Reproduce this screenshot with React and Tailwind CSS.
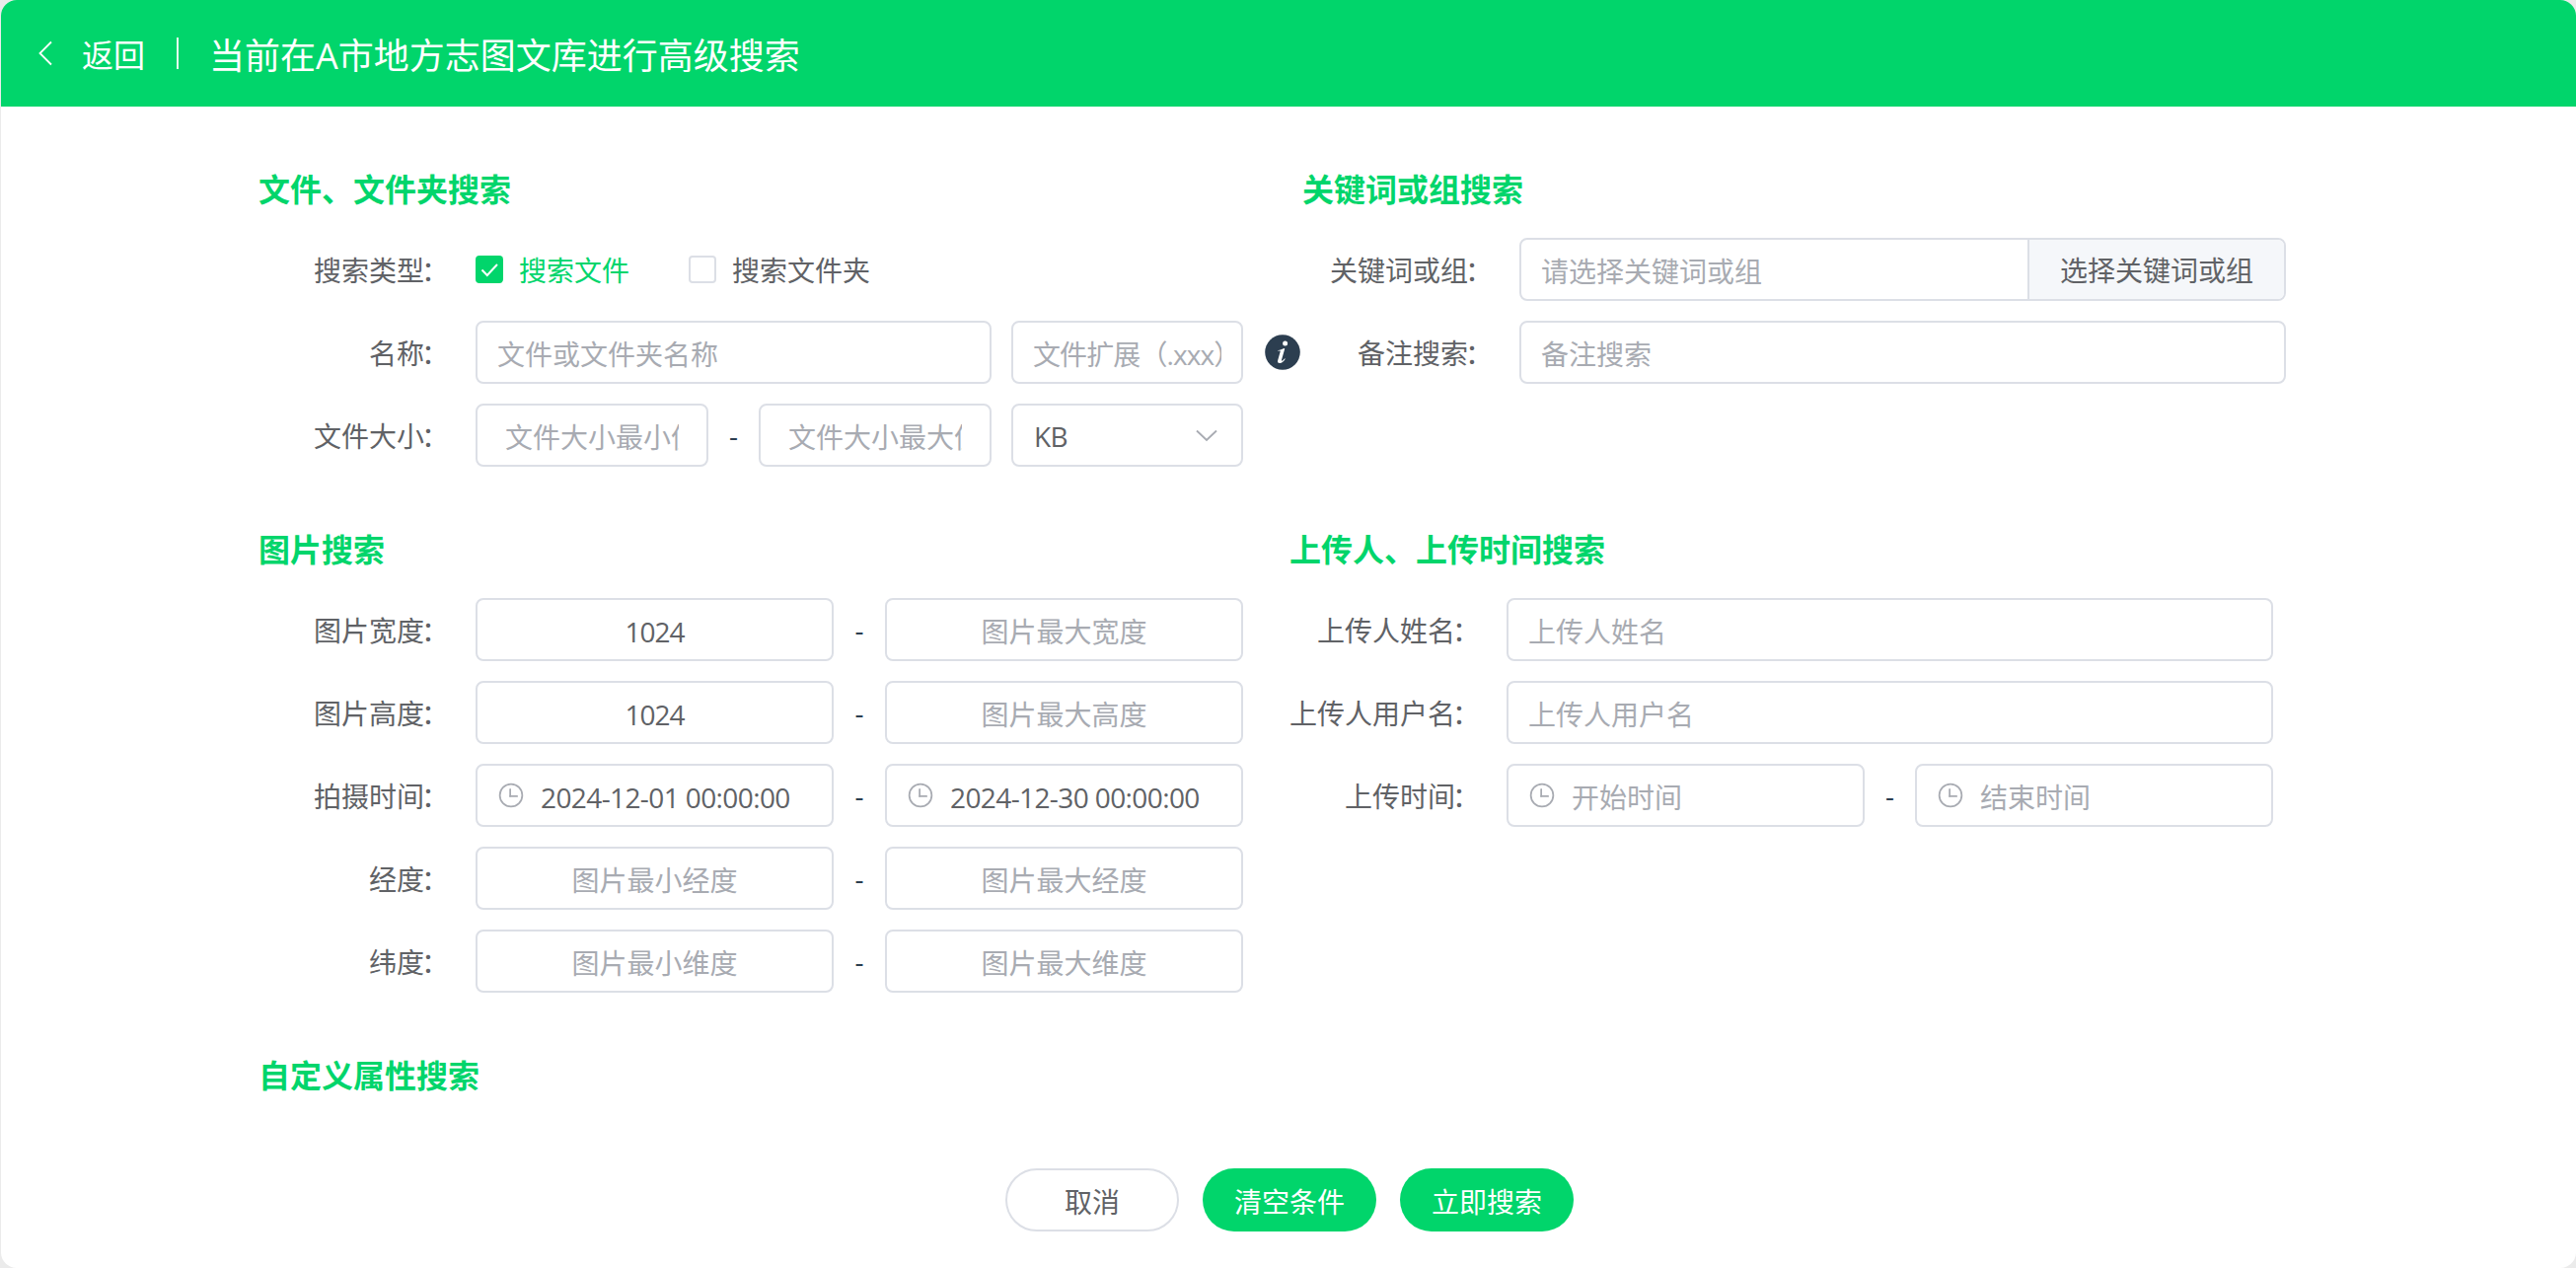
import { useState } from 'react';
import clsx from 'clsx';

const ClockIcon = () => (
  <svg viewBox="0 0 1024 1024" className="w-7 h-7 shrink-0 text-[#a8abb2]" fill="currentColor">
    <path d="M512 896a384 384 0 1 0 0-768 384 384 0 0 0 0 768m0 64a448 448 0 1 1 0-896 448 448 0 0 1 0 896" />
    <path d="M480 256a32 32 0 0 1 32 32v256a32 32 0 0 1-64 0V288a32 32 0 0 1 32-32" />
    <path d="M480 512h256q32 0 32 32t-32 32H480q-32 0-32-32t32-32" />
  </svg>
);

const InfoIcon = () => (
  <svg viewBox="0 0 36 36" className="w-9 h-9 shrink-0">
    <circle cx="18" cy="18" r="17.8" fill="#2c3e50" />
    <circle cx="20.6" cy="9" r="2.5" fill="#fff" />
    <path
      d="M13.2 16.200c2.400-.5 4.300-1.500 6.600-2.200l.4.4-3.200 11.400c-.3 1.200.5 1.200 1.200.5l2-2.100.5.5c-1.500 2.300-3.300 4.300-5.600 4.300-2 0-2.400-1.400-1.900-3.100l2.500-8.600c.2-.8-.5-.9-2.500-.6z"
      fill="#fff"
    />
  </svg>
);

const Field = ({ value = '', placeholder, center, number, icon, tight, className }) => {
  const [text, setText] = useState(value);

  return (
    <div
      className={clsx(
        'flex items-center h-16 border-2 border-[#dcdfe6] rounded-lg bg-white shrink-0',
        number ? 'px-7' : 'px-5',
        className
      )}
    >
      {icon && <div className="mr-4"><ClockIcon /></div>}
      <input
        value={text}
        onChange={(e) => setText(e.target.value)}
        placeholder={placeholder}
        className={clsx(
          'w-full min-w-0 h-[60px] pt-[3px] bg-transparent outline-none text-[#606266] placeholder:text-[#a8abb2]',
          tight ? 'placeholder:tracking-[-0.9px]' : 'placeholder:tracking-normal',
          number ? 'tracking-[-1px]' : 'tracking-[-0.6px]',
          center && 'text-center'
        )}
      />
    </div>
  );
};

const Row = ({ label, width, children }) => (
  <div className="flex items-center h-16">
    <div className={clsx('text-right whitespace-nowrap mr-6 pt-[2px]', width)}>
      {label}
      <span className="-ml-[3px] mr-[3px]">：</span>
    </div>
    {children}
  </div>
);

const Dash = () => <span className="flex-1 text-center text-[#2c3e50]">-</span>;

// min / max pair separated by a dash
const Range = ({ children }) => <div className="flex items-center w-[778px]">{children}</div>;

const Title = ({ children }) => (
  <h3 className="h-[42px] leading-[42px] text-[32px] font-bold text-[#01d56b] whitespace-nowrap">{children}</h3>
);

const Check = ({ label, defaultChecked = false }) => {
  const [checked, setChecked] = useState(defaultChecked);

  return (
    <label onClick={() => setChecked(!checked)} className="flex items-center gap-4 mr-[60px] cursor-pointer">
      <span
        className={clsx(
          'flex items-center justify-center w-7 h-7 rounded border-2',
          checked ? 'bg-[#01d56b] border-[#01d56b]' : 'bg-white border-[#dcdfe6]'
        )}
      >
        {checked && (
          <svg viewBox="0 0 24 24" className="w-6 h-6 shrink-0" fill="none" stroke="#fff" strokeWidth="2">
            <path d="M4.500 12.500l5.300 5.500L20 7" />
          </svg>
        )}
      </span>
      <span className={clsx('pt-[2px]', checked && 'text-[#01d56b]')}>{label}</span>
    </label>
  );
};

const imageRanges = [
  { label: '图片宽度', value: '1024', min: '图片最小宽度', max: '图片最大宽度' },
  { label: '图片高度', value: '1024', min: '图片最小高度', max: '图片最大高度' },
  { label: '拍摄时间', start: '2024-12-01 00:00:00', end: '2024-12-30 00:00:00' },
  { label: '经度', min: '图片最小经度', max: '图片最大经度' },
  { label: '纬度', min: '图片最小维度', max: '图片最大维度' },
];

const App = () => {
  return (
    <div className="w-[2611px] h-[1285px] pl-px overflow-hidden bg-[#ebebeb] font-['Open_Sans','Noto_Sans_CJK_SC',sans-serif] text-[28px] leading-10 text-[#606266]">
      <div className="w-full h-full bg-white rounded-[16px] overflow-hidden">
        <header className="flex items-center h-[108px] pl-[31px] bg-[#01d56b] text-white">
          <svg viewBox="0 0 28 28" className="w-7 h-7" fill="none" stroke="currentColor" strokeWidth="1.8">
            <path d="M20 2.500L8.500 14L20 25.500" />
          </svg>
          <span className="ml-[23px] pt-[4px] text-[32px]">返回</span>
          <span className="w-0.5 h-8 ml-8 mr-[31px] bg-white/90" />
          <h1 className="pt-[5px] text-[36px]">当前在A市地方志图文库进行高级搜索</h1>
        </header>

        <main className="pl-[261px] pt-[63px]">
          <div className="flex">
            <section className="w-[1058px] space-y-5">
              <Title>文件、文件夹搜索</Title>
              <div className="space-y-5 pt-[8px]">
                <Row label="搜索类型" width="w-[196px]">
                  <Check label="搜索文件" defaultChecked />
                  <Check label="搜索文件夹" />
                </Row>
                <Row label="名称" width="w-[196px]">
                  <Field placeholder="文件或文件夹名称" className="w-[523px]" />
                  <Field tight placeholder="文件扩展（.xxx）" className="w-[235px] ml-5 mr-[22px]" />
                  <InfoIcon />
                </Row>
                <Row label="文件大小" width="w-[196px]">
                  <Range>
                    <Field number placeholder="文件大小最小值" className="w-[236px]" />
                    <Dash />
                    <Field number placeholder="文件大小最大值" className="w-[236px]" />
                    <div className="flex items-center justify-between w-[235px] h-16 ml-5 px-[21px] border-2 border-[#dcdfe6] rounded-lg">
                      <span className="pt-[2px] tracking-[-0.6px]">KB</span>
                      <svg viewBox="0 0 28 28" className="w-7 h-7" fill="none" stroke="#a8abb2" strokeWidth="1.8">
                        <path d="M4 9.500L14 19L24 9.500" />
                      </svg>
                    </div>
                  </Range>
                </Row>
              </div>
            </section>

            <section className="space-y-5">
              <Title>关键词或组搜索</Title>
              <div className="space-y-5 pt-[8px]">
                <Row label="关键词或组" width="w-[196px]">
                  <div className="flex w-[777px] h-16 border-2 border-[#dcdfe6] rounded-lg overflow-hidden">
                    <input
                      placeholder="请选择关键词或组"
                      className="flex-1 px-5 pt-[3px] outline-none placeholder:text-[#a8abb2]"
                    />
                    <button className="w-[260px] pt-[2px] border-l-2 border-[#dcdfe6] bg-[#f5f7fa]">选择关键词或组</button>
                  </div>
                </Row>
                <Row label="备注搜索" width="w-[196px]">
                  <Field placeholder="备注搜索" className="w-[777px]" />
                </Row>
              </div>
            </section>
          </div>

          <div className="flex mt-[63px]">
            <section className="w-[1045px] space-y-5">
              <Title>图片搜索</Title>
              <div className="space-y-5 pt-[8px]">
                {imageRanges.map((item) => (
                  <Row key={item.label} label={item.label} width="w-[196px]">
                    <Range>
                      <Field
                        icon={Boolean(item.start)}
                        center={!item.start}
                        number={!item.start}
                        value={item.start || item.value}
                        placeholder={item.min}
                        className="w-[363px]"
                      />
                      <Dash />
                      <Field
                        icon={Boolean(item.end)}
                        center={!item.end}
                        number={!item.end}
                        value={item.end}
                        placeholder={item.max}
                        className="w-[363px]"
                      />
                    </Range>
                  </Row>
                ))}
              </div>
            </section>

            <section className="space-y-5">
              <Title>上传人、上传时间搜索</Title>
              <div className="space-y-5 pt-[8px]">
                <Row label="上传人姓名" width="w-[196px]">
                  <Field placeholder="上传人姓名" className="w-[777px]" />
                </Row>
                <Row label="上传人用户名" width="w-[196px]">
                  <Field placeholder="上传人用户名" className="w-[777px]" />
                </Row>
                <Row label="上传时间" width="w-[196px]">
                  <div className="flex items-center w-[777px]">
                    <Field icon placeholder="开始时间" className="w-[363px]" />
                    <Dash />
                    <Field icon placeholder="结束时间" className="w-[363px]" />
                  </div>
                </Row>
              </div>
            </section>
          </div>

          <div className="mt-[63px]">
            <Title>自定义属性搜索</Title>
          </div>
        </main>

        <footer className="flex gap-6 pl-[1018px] mt-[73px]">
          <button className="w-44 h-16 pt-[3px] rounded-full border-2 border-[#dcdfe6]">取消</button>
          <button className="w-44 h-16 pt-[3px] rounded-full bg-[#01d56b] text-white">清空条件</button>
          <button className="w-44 h-16 pt-[3px] rounded-full bg-[#01d56b] text-white">立即搜索</button>
        </footer>
      </div>
    </div>
  );
};

export default App;
